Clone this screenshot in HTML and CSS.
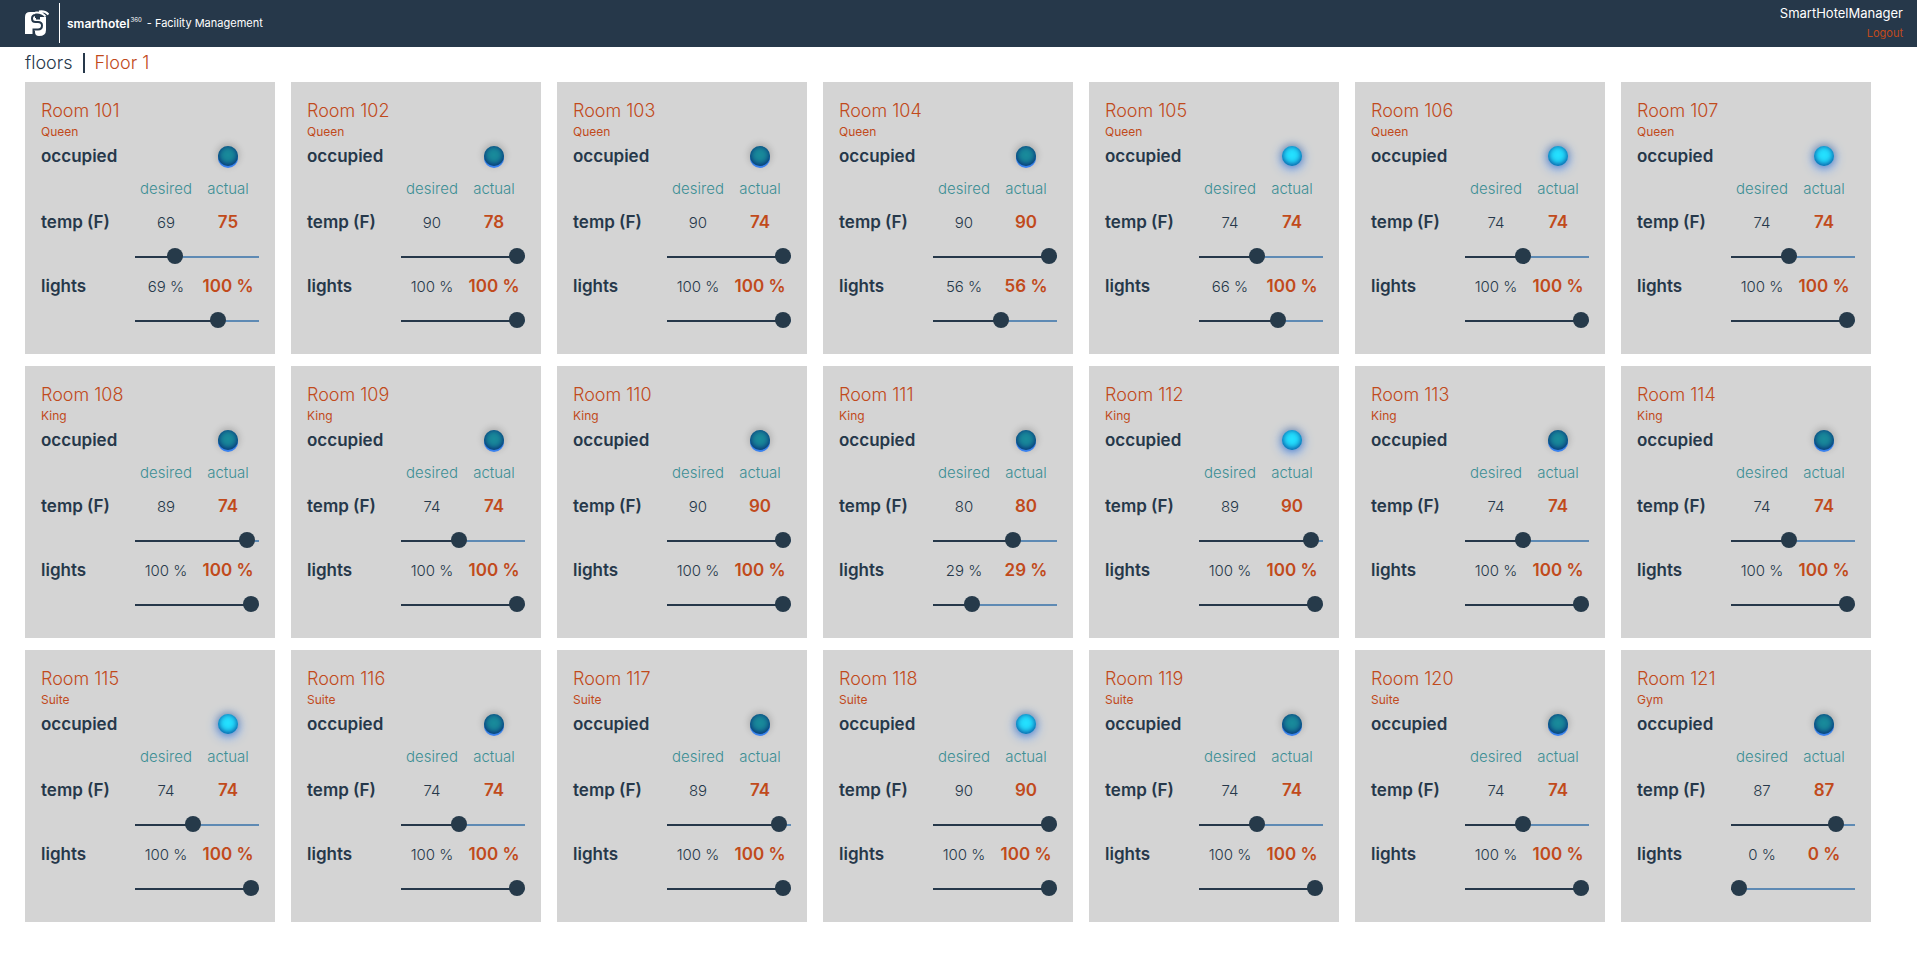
FILE: index.html
```html
<!DOCTYPE html>
<html lang="en">
<head>
<meta charset="utf-8">
<meta name="viewport" content="width=device-width, initial-scale=1">
<title>SmartHotel360 - Facility Management</title>
<link rel="stylesheet" href="styles.css">
</head>
<body>
<header class="topbar">
  <div class="brand">
    <svg class="brand-mark" viewBox="0 0 24 26" aria-hidden="true">
      <path class="brand-fill" d="M0 24V7Q0 2 5 2H10V9H15V7H21V20Q21 26 14 26Q10 26 10 22V18H8V24Z"/>
      <path class="brand-fill" d="M6 8H17V21H6Z"/>
      <path class="brand-line" d="M13 5H10.500Q7 5 7 8.500Q7 12 10.500 12H13Q17 12 17 15.500Q17 19.500 13 19.500H8.500V26"/>
      <path class="brand-gap" d="M11 7H15V9.500H11Z"/>
      <path class="brand-arc" d="M14 1.500Q20 .5 23.500 4.500M10 2.700Q17 2 20.500 6.500"/>
    </svg>
    <span class="brand-text"><b>smarthotel</b><sup>360</sup> <span class="brand-sub">- Facility Management</span></span>
  </div>
  <div class="account">
    <span class="account-name">SmartHotelManager</span>
    <a class="logout" href="#logout">Logout</a>
  </div>
</header>
<nav class="crumbs" aria-label="Breadcrumb">
  <a class="crumb" href="#floors">floors</a>
  <span class="crumb-bar"></span>
  <span class="crumb-current">Floor 1</span>
</nav>
<main class="rooms" id="rooms"></main>
<script src="app.js"></script>
</body>
</html>
```
FILE: styles.css
```css
* { box-sizing: border-box; }

body {
  margin: 0;
  background: #fff;
  color: #26384a;
  font-family: Inter, "Open Sans", sans-serif;
  font-size: 16px;
}

a { color: inherit; text-decoration: none; }

.topbar {
  display: flex;
  justify-content: space-between;
  height: 47px;
  padding: 3px 14px 4px 25px;
  background: #26384a;
  color: #fff;
}

.brand { display: flex; align-items: center; }

.brand-mark { width: 24px; height: 26px; }
.brand-fill { fill: #fff; }
.brand-gap { fill: #26384a; }
.brand-line { fill: none; stroke: #26384a; stroke-width: 2; }
.brand-arc { fill: none; stroke: #fff; stroke-width: 2; }

.brand-text {
  display: flex;
  align-items: center;
  height: 40px;
  margin-left: 10px;
  padding-left: 7px;
  border-left: 1px solid #fff;
  font-size: 12px;
  white-space: pre;
}

.brand-text b { font-weight: 600; }
.brand-text sup { margin: 0 5px 6px 1px; font-size: 6px; line-height: 8px; }
.brand-sub { font-size: 11px; font-weight: 400; }

.account {
  display: flex;
  flex-direction: column;
  align-items: flex-end;
}

.account-name { font-size: 13px; line-height: 20px; }
.logout { color: #c14a1b; font-size: 11px; line-height: 20px; }

.crumbs {
  display: flex;
  align-items: center;
  gap: 10px;
  height: 35px;
  padding: 0 25px 4px;
  font-size: 18px;
  font-weight: 300;
}

.crumb-bar { width: 2px; height: 20px; background: #26384a; }
.crumb-current { color: #c14a1b; }

.rooms {
  display: grid;
  grid-template-columns: repeat(auto-fill, 250px);
  gap: 12px 16px;
  padding: 0 25px 37px;
}

.room {
  padding: 17px 16px 22px;
  background: #d4d4d4;
}

.room-name {
  margin: 0;
  color: #c14a1b;
  font-size: 18px;
  font-weight: 300;
  line-height: 24px;
}

.room-type {
  margin: 0;
  color: #c14a1b;
  font-size: 12px;
  line-height: 17px;
}

.row {
  display: grid;
  grid-template-columns: 94px 1fr 1fr;
  align-items: center;
  justify-items: center;
  height: 36px;
}

.row-short { height: 32px; }

.label { justify-self: start; font-size: 17px; font-weight: 600; }
.head { grid-column: 2; color: #3d8f94; font-size: 15px; font-weight: 300; }
.head + .head { grid-column: 3; }
.desired { font-size: 15px; font-weight: 300; }
.actual { color: #c14a1b; font-size: 17px; font-weight: 600; white-space: nowrap; }

.led {
  grid-column: 3;
  width: 20px;
  height: 20px;
  border-radius: 50%;
  background: #198a9b;
  box-shadow: rgba(0, 0, 0, .2) 0 -1px 7px 1px, inset rgba(0, 20, 110, .9) 0 -1px 6px, #3f8cff 0 2px 0;
}

.led-on {
  background: #24e0ff;
  box-shadow: rgba(0, 0, 0, .2) 0 -1px 7px 1px, inset rgba(0, 40, 130, .9) 0 -1px 6px, #3f8cff 0 2px 12px;
}

.slider {
  display: block;
  width: 124px;
  height: 16px;
  margin: 9px 0 3px auto;
  background: none;
  appearance: none;
}

.slider::-webkit-slider-runnable-track {
  height: 2px;
  background: linear-gradient(to right, #26384a calc(8px + (100% - 16px) * var(--level)), #5e8ab4 0);
}

.slider::-webkit-slider-thumb {
  width: 16px;
  height: 16px;
  margin-top: -8px;
  border-radius: 50%;
  background: #263a4a;
  appearance: none;
}
```
FILE: app.js
```js
// number, type, occupied, desired temp, actual temp, desired light, actual light
const rooms = [
  [101, "Queen", 0, 69, 75, 69, 100],
  [102, "Queen", 0, 90, 78, 100, 100],
  [103, "Queen", 0, 90, 74, 100, 100],
  [104, "Queen", 0, 90, 90, 56, 56],
  [105, "Queen", 1, 74, 74, 66, 100],
  [106, "Queen", 1, 74, 74, 100, 100],
  [107, "Queen", 1, 74, 74, 100, 100],
  [108, "King", 0, 89, 74, 100, 100],
  [109, "King", 0, 74, 74, 100, 100],
  [110, "King", 0, 90, 90, 100, 100],
  [111, "King", 0, 80, 80, 29, 29],
  [112, "King", 1, 89, 90, 100, 100],
  [113, "King", 0, 74, 74, 100, 100],
  [114, "King", 0, 74, 74, 100, 100],
  [115, "Suite", 1, 74, 74, 100, 100],
  [116, "Suite", 0, 74, 74, 100, 100],
  [117, "Suite", 0, 89, 74, 100, 100],
  [118, "Suite", 1, 90, 90, 100, 100],
  [119, "Suite", 0, 74, 74, 100, 100],
  [120, "Suite", 0, 74, 74, 100, 100],
  [121, "Gym", 0, 87, 87, 0, 0]
];

function control(id, label, desired, actual, unit, min, max) {
  const level = (desired - min) / (max - min);
  return `
    <div class="row">
      <label class="label" for="${id}">${label}</label>
      <span class="desired">${desired}${unit}</span>
      <span class="actual">${actual}${unit}</span>
    </div>
    <input class="slider" id="${id}" type="range" min="${min}" max="${max}" value="${desired}" style="--level: ${level}">`;
}

document.getElementById("rooms").innerHTML = rooms.map(([no, type, occupied, dt, at, dl, al]) => `
  <section class="room">
    <h2 class="room-name">Room ${no}</h2>
    <p class="room-type">${type}</p>
    <div class="row row-short">
      <span class="label">occupied</span>
      <span class="led${occupied ? " led-on" : ""}"></span>
    </div>
    <div class="row row-short">
      <span class="head">desired</span>
      <span class="head">actual</span>
    </div>
    ${control("temp-" + no, "temp (F)", dt, at, "", 60, 90)}
    ${control("light-" + no, "lights", dl, al, " %", 0, 100)}
  </section>`).join("");

for (const slider of document.querySelectorAll(".slider")) {
  slider.addEventListener("input", () => {
    slider.style.setProperty("--level", (slider.value - slider.min) / (slider.max - slider.min));
  });
}
```
